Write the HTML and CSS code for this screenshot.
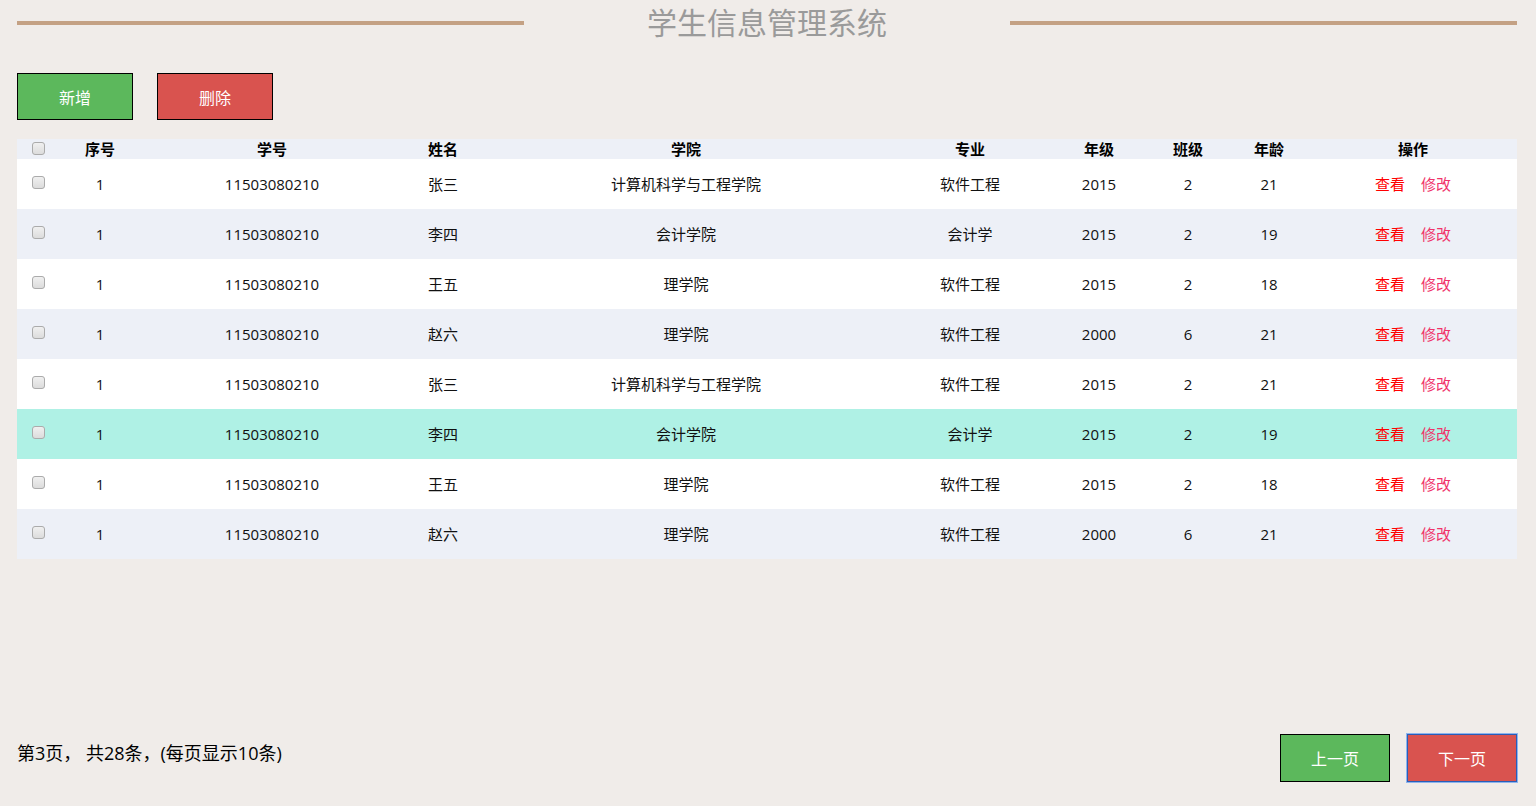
FILE: index.html
```html
<!DOCTYPE html>
<html lang="zh-CN">
<head>
<meta charset="utf-8">
<title>学生信息管理系统</title>
<link rel="stylesheet" href="styles.css">
</head>
<body>
<div class="page">
  <header class="title-bar">
    <span class="title-line"></span>
    <h1 class="title">学生信息管理系统</h1>
    <span class="title-line"></span>
  </header>

  <div class="toolbar">
    <button class="btn btn-green">新增</button>
    <button class="btn btn-red">删除</button>
  </div>

  <table class="grid">
    <colgroup>
      <col class="c-check"><col class="c-no"><col class="c-id"><col class="c-name"><col class="c-college">
      <col class="c-major"><col class="c-year"><col class="c-class"><col class="c-age"><col class="c-op">
    </colgroup>
    <thead>
      <tr>
        <th><span class="cb"></span></th><th>序号</th><th>学号</th><th>姓名</th><th>学院</th>
        <th>专业</th><th>年级</th><th>班级</th><th>年龄</th><th>操作</th>
      </tr>
    </thead>
    <tbody>
      <tr><td><span class="cb"></span></td><td>1</td><td>11503080210</td><td>张三</td><td>计算机科学与工程学院</td><td>软件工程</td><td>2015</td><td>2</td><td>21</td><td><a class="view">查看</a><a class="edit">修改</a></td></tr>
      <tr><td><span class="cb"></span></td><td>1</td><td>11503080210</td><td>李四</td><td>会计学院</td><td>会计学</td><td>2015</td><td>2</td><td>19</td><td><a class="view">查看</a><a class="edit">修改</a></td></tr>
      <tr><td><span class="cb"></span></td><td>1</td><td>11503080210</td><td>王五</td><td>理学院</td><td>软件工程</td><td>2015</td><td>2</td><td>18</td><td><a class="view">查看</a><a class="edit">修改</a></td></tr>
      <tr><td><span class="cb"></span></td><td>1</td><td>11503080210</td><td>赵六</td><td>理学院</td><td>软件工程</td><td>2000</td><td>6</td><td>21</td><td><a class="view">查看</a><a class="edit">修改</a></td></tr>
      <tr><td><span class="cb"></span></td><td>1</td><td>11503080210</td><td>张三</td><td>计算机科学与工程学院</td><td>软件工程</td><td>2015</td><td>2</td><td>21</td><td><a class="view">查看</a><a class="edit">修改</a></td></tr>
      <tr class="hover"><td><span class="cb"></span></td><td>1</td><td>11503080210</td><td>李四</td><td>会计学院</td><td>会计学</td><td>2015</td><td>2</td><td>19</td><td><a class="view">查看</a><a class="edit">修改</a></td></tr>
      <tr><td><span class="cb"></span></td><td>1</td><td>11503080210</td><td>王五</td><td>理学院</td><td>软件工程</td><td>2015</td><td>2</td><td>18</td><td><a class="view">查看</a><a class="edit">修改</a></td></tr>
      <tr><td><span class="cb"></span></td><td>1</td><td>11503080210</td><td>赵六</td><td>理学院</td><td>软件工程</td><td>2000</td><td>6</td><td>21</td><td><a class="view">查看</a><a class="edit">修改</a></td></tr>
    </tbody>
  </table>

  <footer class="pager">
    <span class="pager-info">第3页， 共28条，(每页显示10条)</span>
    <div class="pager-btns">
      <button class="btn btn-green btn-page">上一页</button>
      <button class="btn btn-red btn-page focused">下一页</button>
    </div>
  </footer>
</div>
</body>
</html>
```

FILE: styles.css
```css
* { box-sizing: border-box; }

html, body {
  margin: 0;
  padding: 0;
  background: #f0ece9;
}

body {
  font-family: "Open Sans", "Noto Sans CJK SC", sans-serif;
  color: #222;
}

.page {
  width: 1500px;
  margin-left: 17px;
  height: 806px;
  display: flex;
  flex-direction: column;
}

.title-bar {
  height: 42px;
  display: flex;
  align-items: center;
}

.title-line {
  flex: 1;
  height: 4px;
  margin-top: 3px;
  background: #c4a184;
}

.title {
  width: 486px;
  margin: 0;
  text-align: center;
  font-family: "Noto Sans CJK SC", sans-serif;
  font-size: 30px;
  font-weight: normal;
  line-height: 42px;
  color: #9a9a9a;
}

.toolbar {
  display: flex;
  gap: 24px;
  margin-top: 31px;
}

.btn {
  width: 116px;
  height: 47px;
  border: 1px solid #000;
  color: #fff;
  font-family: "Noto Sans CJK SC", sans-serif;
  font-size: 16px;
  padding: 0;
  cursor: pointer;
}

.btn-green { background: #5cb85c; }
.btn-red { background: #d9534f; }

.grid {
  margin-top: 19px;
  width: 1500px;
  table-layout: fixed;
  border-collapse: collapse;
  font-size: 14px;
}

.c-check { width: 42px; }
.c-no { width: 82px; }
.c-id { width: 262px; }
.c-name { width: 80px; }
.c-college { width: 406px; }
.c-major { width: 162px; }
.c-year { width: 96px; }
.c-class { width: 82px; }
.c-age { width: 80px; }
.c-op { width: 208px; }

.grid th {
  height: 20px;
  padding: 0;
  line-height: 20px;
  font-size: 15px;
  font-weight: bold;
  color: #000;
  background: #edf0f7;
  text-align: center;
  vertical-align: middle;
}

.grid td {
  height: 50px;
  padding: 0;
  font-size: 15px;
  line-height: 20px;
  text-align: center;
  vertical-align: middle;
  color: #111;
}

.grid tbody tr { background: #fff; }
.grid tbody tr:nth-child(even) { background: #edf0f7; }
.grid tbody tr.hover { background: #aff1e5; }

.cb {
  display: inline-block;
  width: 13px;
  height: 13px;
  border: 1px solid #ababab;
  border-radius: 3px;
  background: linear-gradient(#f0f0f0, #dcdcdc);
  vertical-align: middle;
  margin-top: -6px;
}

.grid th .cb { margin-top: -4px; }

.view { color: #ff0000; margin-right: 16px; }
.edit { color: #f0336a; }

.pager {
  margin-top: auto;
  margin-bottom: 24px;
  display: flex;
  align-items: flex-start;
  justify-content: space-between;
}

.pager-info {
  margin-top: 6px;
  font-size: 18px;
  line-height: 26px;
  color: #000;
}

.pager-btns {
  display: flex;
  gap: 17px;
}

.btn-page {
  width: 110px;
  height: 48px;
}

.focused {
  border: 1px solid #2a5db8;
  box-shadow: 0 0 0 1px #8db4ee;
}
```
